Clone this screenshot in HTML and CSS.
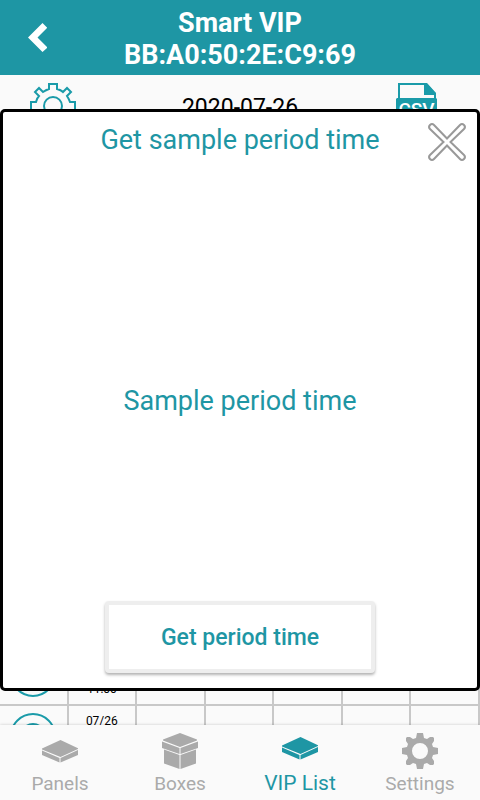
FILE: index.html
```html
<!DOCTYPE html>
<html lang="en">
<head>
<meta charset="utf-8">
<meta name="viewport" content="width=device-width, initial-scale=1">
<title>Smart VIP</title>
<link rel="stylesheet" href="styles.css">
</head>
<body>
<header class="header">
  <button class="back" aria-label="Back"><svg width="20" height="30" viewBox="0 0 20 30"><path d="M0 14.500 14.500 0 19 4.500V5L9.500 14.500 19 24v1L14.500 29Z"/></svg></button>
  <h1>Smart VIP<br>BB:A0:50:2E:C9:69</h1>
</header>
<main class="main">
  <div class="toolbar">
    <button class="tool" aria-label="Sampling options"><svg width="46" height="46" viewBox="-23 -23 46 46"><g class="line"><path d="M-4-22H4V-17Q8-16 10-14L14-18 18-14 14-10Q16-7 17-4H22V4H17Q16 8 14 10L18 14 14 18 10 14Q7 16 4 17V22H-4V17Q-8 16-10 14L-14 18-18 14-14 10Q-16 7-17 4H-22V-4H-17Q-16-8-14-10L-18-14-14-18-10-14Q-7-16-4-17Z"/><circle r="9"/></g></svg></button>
    <span class="date">2020-07-26</span>
    <button class="tool" aria-label="Export CSV"><svg width="42" height="46" viewBox="0 0 42 46"><path class="line" d="M3 16V1H30L39 11V16M3 37V45H39V37"/><path class="solid" d="M28 0H31L40 10V12H28Z"/><path class="solid" d="M0 16 1 15H40L41 16V38H0Z"/><text x="20.500" y="33">CSV</text></svg></button>
  </div>
  <table class="log">
    <tr><td><svg class="signal" width="46" height="46" viewBox="-23 -23 46 46"><circle r="22"/><circle r="12"/></svg></td><td>07/26<br>11:00</td><td></td><td></td><td></td><td></td><td></td></tr>
    <tr><td><svg class="signal" width="46" height="46" viewBox="-23 -23 46 46"><circle r="22"/><circle r="12"/></svg></td><td>07/26<br>11:00</td><td></td><td></td><td></td><td></td><td></td></tr>
  </table>
</main>
<nav class="tabs">
  <a href="#panels"><svg width="36" height="36" viewBox="0 0 36 36"><path d="M18.500 7 36 15.200V16L18.500 24 0 16.500V15.500ZM0 17.500 17.500 25V29.500L0 22ZM36 17 18.500 25V29.500L36 22Z"/></svg><span>Panels</span></a>
  <a href="#boxes"><svg width="36" height="36" viewBox="0 0 36 36"><path d="M18 0 35 6.500V7.500L18 14 1 7.500V6.500ZM0 8.500 17.500 15V21L0 15ZM36 8.500 18.500 15V21L36 15ZM2 16.500 17.500 22V36L2 30.500ZM34 16.500 18.500 22V36L34 30.500Z"/></svg><span>Boxes</span></a>
  <a class="active" href="#vip" aria-current="page"><svg width="36" height="36" viewBox="0 0 36 36"><path d="M18.500 7 36 15.200V16L18.500 24 0 16.500V15.500ZM0 17.500 17.500 25V29.500L0 22ZM36 17 18.500 25V29.500L36 22Z"/></svg><span>VIP List</span></a>
  <a href="#settings"><svg width="36" height="36" viewBox="-18 -18 36 36"><path fill-rule="evenodd" d="M-3-18H3L4-13 7-12 10-14H13L14-13V-10L12-7 13-4 18-3V3L13 4 12 7 14 10V13L13 14H10L7 12 4 13 3 18H-3L-4 13-7 12-10 14H-13L-14 13V10L-12 7-13 4-18 3V-3L-13-4-12-7-14-10V-13L-13-14H-10L-7-12-4-13ZM8 0A8 8 0 1 0-8 0 8 8 0 1 0 8 0Z"/></svg><span>Settings</span></a>
</nav>
<section class="dialog" role="dialog" aria-labelledby="dialog-title">
  <h2 id="dialog-title">Get sample period time</h2>
  <button class="close" aria-label="Close"><svg width="38" height="38" viewBox="-19 -19 38 38"><path d="M0-3.500 13-17Q15-19 17-17 19-15 17-13L3.500 0 17 13Q19 15 17 17 15 19 13 17L0 3.500-13 17Q-15 19-17 17-19 15-17 13L-3.500 0-17-13Q-19-15-17-17-15-19-13-17Z"/></svg></button>
  <p>Sample period time</p>
  <button class="fetch">Get period time</button>
</section>
</body>
</html>
```
FILE: styles.css
```css
* { box-sizing: border-box; }
:root { --teal: #1e96a4; --grey: #aaa; }
body {
  margin: 0;
  height: 100vh;
  display: flex;
  flex-direction: column;
  position: relative;
  overflow: hidden;
  background: #fafafa;
  color: #000;
  font-family: Roboto, sans-serif;
}
button { border: 0; padding: 0; background: none; font: inherit; }
svg { display: block; }
.header {
  display: grid;
  grid-template-columns: 76px 1fr 76px;
  align-items: center;
  height: 75px;
  flex: none;
  background: var(--teal);
  color: #fff;
}
.header h1 { margin: 0; padding-top: 2px; font-size: 27px; line-height: 32px; font-weight: 700; text-align: center; }
.back { justify-self: center; fill: #fff; }
.main { flex: 1; min-height: 0; display: flex; flex-direction: column; justify-content: space-between; overflow: hidden; }
.toolbar { display: grid; grid-template-columns: 106px 1fr 106px; align-items: center; height: 62px; padding-right: 10px; flex: none; }
.tool { justify-self: center; }
.date { padding: 2px 0 0 10px; text-align: center; font-size: 23px; }
.line { fill: none; stroke: #1a9ba9; stroke-width: 2; }
.solid { fill: #1a9ba9; }
.tool text { fill: #fff; font-size: 19px; font-weight: 500; text-anchor: middle; }
.log { width: calc(100% + 2px); table-layout: fixed; border-collapse: collapse; margin: 0 0 -43px -2px; flex: none; }
.log td { height: 62px; padding: 0; border: 2px solid #c8c8c8; text-align: center; font-size: 12px; line-height: 30px; }
.signal { margin: 0 auto; fill: none; stroke: #1a9ba9; stroke-width: 2; }
.tabs { display: flex; height: 75px; flex: none; background: #fafafa; box-shadow: 0 0 3px rgba(0, 0, 0, .2); z-index: 1; }
.tabs a {
  flex: 1;
  display: flex;
  flex-direction: column;
  align-items: center;
  justify-content: space-between;
  padding: 8px 0 4px;
  color: var(--grey);
  fill: currentColor;
  font-size: 19px;
  line-height: 24px;
  text-decoration: none;
}
.tabs .active { padding: 5px 0; color: var(--teal); font-size: 21px; }
.dialog {
  position: absolute;
  inset: 109px 0 109px;
  display: flex;
  flex-direction: column;
  align-items: center;
  justify-content: space-between;
  padding: 12px 0 15px;
  border: 3px solid #000;
  border-radius: 5px;
  background: #fff;
  color: var(--teal);
  font-size: 27px;
  line-height: 32px;
  z-index: 2;
}
.dialog h2 { margin: 0; font-size: inherit; font-weight: 400; }
.dialog p { margin: 44px 0 0; }
.close { position: absolute; top: 11px; right: 11px; fill: none; stroke: #999; stroke-width: 2; }
.fetch {
  width: 270px;
  height: 72px;
  padding-top: 2px;
  border: 4px solid #eee;
  border-radius: 4px;
  background: #fff;
  box-shadow: 0 2px 3px rgba(0, 0, 0, .3);
  color: var(--teal);
  font-size: 23px;
  font-weight: 500;
}
```
